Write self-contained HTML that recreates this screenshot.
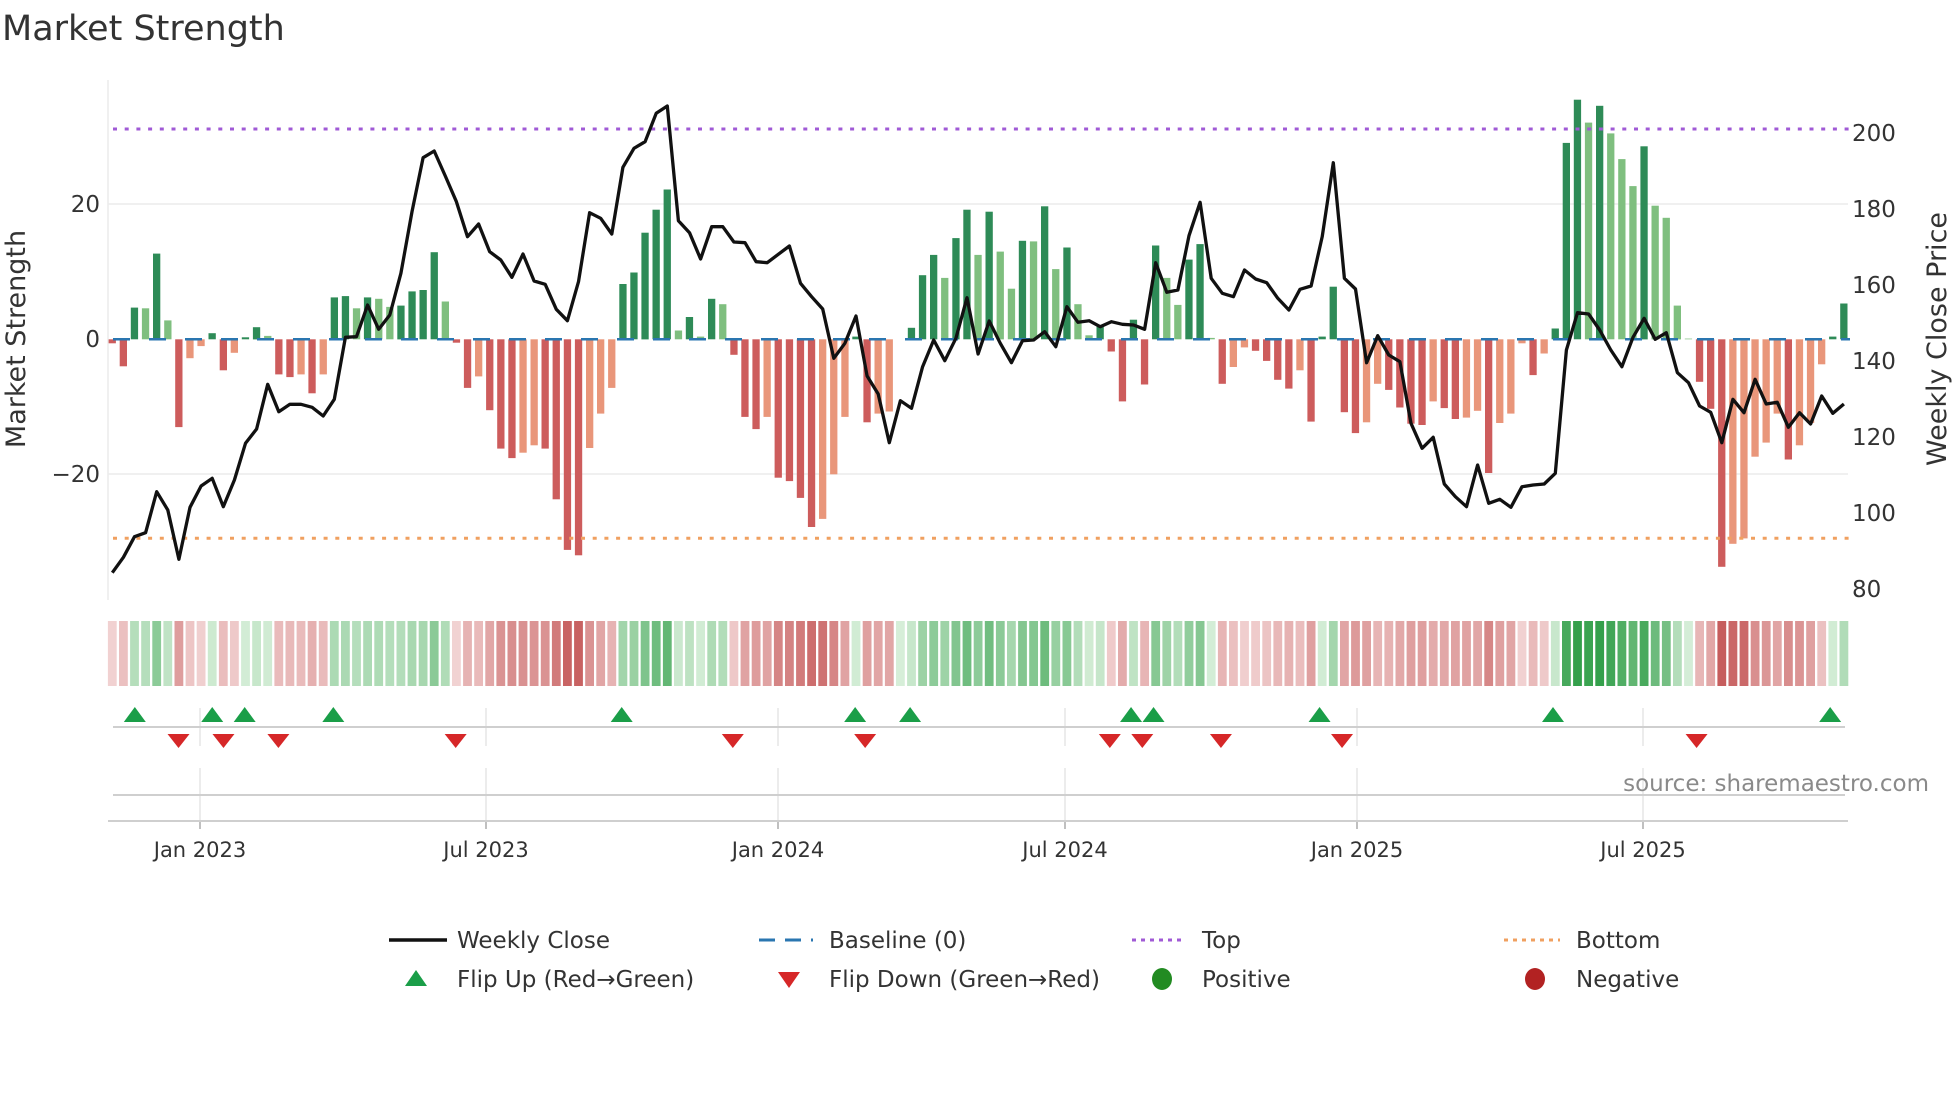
<!DOCTYPE html>
<html><head><meta charset="utf-8"><style>
html,body{margin:0;padding:0;background:#fff;}
svg{display:block;font-family:"DejaVu Sans","Liberation Sans",sans-serif;}
</style></head><body>
<svg id="c" width="1960" height="1102" viewBox="0 0 1960 1102" xmlns="http://www.w3.org/2000/svg">
<text x="2" y="40" font-size="35" fill="#333">Market Strength</text>
<g id="g"></g>
<g font-size="23" fill="#333">
<text x="100" y="212" text-anchor="end">20</text>
<text x="100" y="347" text-anchor="end">0</text>
<text x="100" y="482" text-anchor="end">−20</text>
<text x="1852" y="141">200</text>
<text x="1852" y="217">180</text>
<text x="1852" y="293">160</text>
<text x="1852" y="369">140</text>
<text x="1852" y="445">120</text>
<text x="1852" y="521">100</text>
<text x="1852" y="597">80</text>
</g>
<text transform="translate(25,339) rotate(-90)" text-anchor="middle" font-size="27" fill="#333">Market Strength</text>
<text transform="translate(1946,339) rotate(-90)" text-anchor="middle" font-size="27" fill="#333">Weekly Close Price</text>
<g font-size="21" fill="#333" text-anchor="middle">
<text x="200" y="857">Jan 2023</text>
<text x="486" y="857">Jul 2023</text>
<text x="778" y="857">Jan 2024</text>
<text x="1065" y="857">Jul 2024</text>
<text x="1357" y="857">Jan 2025</text>
<text x="1643" y="857">Jul 2025</text>
</g>
<text x="1929" y="791" text-anchor="end" font-size="23" fill="#8a8a8a">source: sharemaestro.com</text>
<g font-size="23" fill="#333" transform="translate(0,-5)">
<line x1="389" y1="945" x2="447" y2="945" stroke="#111" stroke-width="3.5"/>
<text x="457" y="953">Weekly Close</text>
<line x1="759" y1="945" x2="813" y2="945" stroke="#2a76b0" stroke-width="3" stroke-dasharray="16,10"/>
<text x="829" y="953">Baseline (0)</text>
<line x1="1132" y1="945" x2="1186" y2="945" stroke="#a05ad6" stroke-width="3" stroke-dasharray="4,5"/>
<text x="1202" y="953">Top</text>
<line x1="1504" y1="945" x2="1560" y2="945" stroke="#f0a060" stroke-width="3" stroke-dasharray="4,5"/>
<text x="1576" y="953">Bottom</text>
<polygon points="405,991 427,991 416,975" fill="#1a9e48"/>
<text x="457" y="992">Flip Up (Red→Green)</text>
<polygon points="778,977 800,977 789,993" fill="#d62728"/>
<text x="829" y="992">Flip Down (Green→Red)</text>
<ellipse cx="1162" cy="984" rx="10" ry="11" fill="#228b22"/>
<text x="1202" y="992">Positive</text>
<ellipse cx="1535" cy="984" rx="10" ry="11" fill="#b22222"/>
<text x="1576" y="992">Negative</text>
</g>
</svg>
<script>
var B=[[-0.6,1],[-4,1],[4.7,1],[4.6,0],[12.7,1],[2.8,0],[-13,1],[-2.8,0],[-1,0],[0.9,1],[-4.6,1],[-2,0],[0.3,1],[1.8,1],[0.5,0],[-5.2,1],[-5.6,1],[-5.2,0],[-8,1],[-5.2,0],
[6.2,1],[6.4,1],[4.6,0],[6.2,1],[6,0],[4.8,0],[5,1],[7.1,1],[7.3,1],[12.9,1],[5.6,0],[-0.5,1],[-7.2,1],[-5.5,0],[-10.5,1],[-16.2,1],[-17.6,1],[-16.8,0],[-15.7,0],[-16.2,1],
[-23.7,1],[-31.2,1],[-32,1],[-16.1,0],[-11,0],[-7.2,0],[8.2,1],[9.9,1],[15.8,1],[19.2,1],[22.2,1],[1.3,0],[3.3,1],[0.4,0],[6,1],[5.2,0],[-2.3,1],[-11.5,1],[-13.3,1],[-11.5,0],
[-20.5,1],[-21,1],[-23.5,1],[-27.8,1],[-26.6,0],[-20,0],[-11.5,0],[0.4,1],[-12.3,1],[-11,0],[-10.7,0],[0,0],[1.7,1],[9.5,1],[12.5,1],[9.1,0],[15,1],[19.2,1],[12.5,0],[18.9,1],
[13,0],[7.5,0],[14.6,1],[14.5,0],[19.7,1],[10.4,0],[13.6,1],[5.2,0],[0.6,0],[1.9,1],[-1.8,1],[-9.2,1],[2.9,1],[-6.7,1],[13.9,1],[9.1,0],[5.1,0],[11.8,1],[14.1,1],[0.2,0],
[-6.6,1],[-4.1,0],[-1.2,0],[-1.7,1],[-3.2,1],[-6,1],[-7.3,1],[-4.6,0],[-12.2,1],[0.4,1],[7.8,1],[-10.8,1],[-13.9,1],[-12.3,0],[-6.6,0],[-7.5,1],[-10.1,1],[-12.5,1],[-12.7,1],[-9.2,0],
[-10.2,1],[-11.8,1],[-11.6,0],[-10.6,0],[-19.8,1],[-12.4,0],[-11,0],[-0.6,0],[-5.3,1],[-2.1,0],[1.6,1],[29.1,1],[35.5,1],[32.1,0],[34.6,1],[30.5,0],[26.7,0],[22.7,0],[28.6,1],[19.8,0],
[18,0],[5,0],[0.1,0],[-6.3,1],[-10.3,1],[-33.7,1],[-30.3,0],[-29.5,0],[-17.4,0],[-15.3,0],[-11,0],[-17.8,1],[-15.7,0],[-12.4,0],[-3.7,0],[0.4,1],[5.3,1]];
var P=[1448,1402,1340,1328,1205,1260,1408,1252,1188,1165,1250,1170,1060,1017,883,965,943,943,952,978,928,742,740,645,718,675,550,365,203,183,258,335,440,402,485,510,562,492,573,583,658,692,575,368,385,432,232,175,155,70,48,392,428,507,410,410,456,458,515,518,493,468,580,620,657,805,760,678,858,912,1058,932,955,830,750,812,745,623,792,693,760,818,752,750,725,770,650,697,692,710,695,703,705,718,518,607,600,437,337,565,610,620,540,567,578,625,660,598,588,440,218,565,597,818,737,795,815,1000,1075,1042,1182,1220,1250,1125,1240,1228,1252,1190,1185,1182,1150,780,668,672,720,780,830,742,685,748,728,848,878,948,967,1058,928,968,868,942,937,1012,968,1002,918,970,942];
var s='',Z=339.3,U=6.75,X=function(i){return 112.3+i*11.1;};
function ln(x1,y1,x2,y2,c,w,d){return '<line x1="'+x1+'" y1="'+y1+'" x2="'+x2+'" y2="'+y2+'" stroke="'+c+'" stroke-width="'+w+'"'+(d?' stroke-dasharray="'+d+'"':'')+'/>';}
s+=ln(108,80,108,600,'#ececec',1.5);
s+=ln(108,204,1848,204,'#ececec',1.5)+ln(108,474,1848,474,'#ececec',1.5);
var T=[200,486,778,1065,1357,1643];
T.forEach(function(t){s+=ln(t,708,t,746,'#e6e6e6',1.5)+ln(t,768,t,821,'#e6e6e6',1.5)+ln(t,821,t,829,'#aaa',1.5);});
s+=ln(113,727,1845,727,'#cfcfcf',2)+ln(113,795,1845,795,'#cfcfcf',2)+ln(108,821,1848,821,'#cfcfcf',2);
function mix(a,b,t){return 'rgb('+a.map(function(v,k){return Math.round(v+(b[k]-v)*t);}).join(',')+')';}
B.forEach(function(b,i){var v=b[0],x=X(i)-3.65,h=Math.abs(v)*U,c;
 if(v>=0)c=b[1]?'#2e8b57':'#7fbf7f';else c=b[1]?'#cd5c5c':'#e9967a';
 if(h>0.3)s+='<rect x="'+x.toFixed(1)+'" y="'+(v>=0?Z-h:Z).toFixed(1)+'" width="7.3" height="'+h.toFixed(1)+'" fill="'+c+'"/>';
 var t=Math.min(Math.abs(v)/34,1),sc=v>=0?mix([214,238,216],[52,160,75],Math.pow(t,0.8)):mix([243,214,214],[198,92,92],Math.pow(t,0.8));
 s+='<rect x="'+(X(i)-4.4).toFixed(1)+'" y="621" width="8.8" height="65" fill="'+sc+'"/>';
});
s+=ln(113,Z,1850,Z,'#2a76b0',2.5,'17,19');
s+=ln(113,129,1853,129,'#a05ad6',3,'4,7.7');
s+=ln(113,538.3,1853,538.3,'#f0a060',3,'4,7.7');
var pts=P.map(function(y,i){return X(i).toFixed(1)+','+(90+y/3).toFixed(1);}).join(' ');
s+='<polyline points="'+pts+'" fill="none" stroke="#111" stroke-width="3.3" stroke-linejoin="round"/>';
var up=[108,170,196,267,498,685,729,906,924,1057,1244,1466],dn=[143,179,223,365,587,693,889,915,978,1075,1359];
up.forEach(function(d){var x=d*1.2484;s+='<polygon points="'+(x-11)+',722 '+(x+11)+',722 '+x+',707" fill="#1a9e48"/>';});
dn.forEach(function(d){var x=d*1.2484;s+='<polygon points="'+(x-11)+',734 '+(x+11)+',734 '+x+',748" fill="#d62728"/>';});
document.getElementById('g').innerHTML=s;
</script>
</body></html>
